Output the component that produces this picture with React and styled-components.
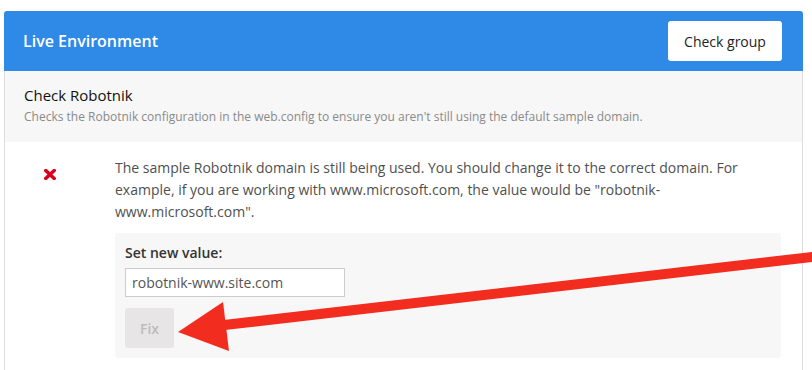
import React from "react";
import styled, { createGlobalStyle } from "styled-components";

const Global = createGlobalStyle`
  html, body { margin: 0; padding: 0; background: #fff; }
  body { font-family: "Open Sans", "Noto Sans", sans-serif; overflow: hidden; }
  * { box-sizing: border-box; }
`;

const Page = styled.div`
  position: relative;
  width: 812px;
  height: 370px;
  padding: 11px 0 0 4px;
  overflow: hidden;
`;

const Panel = styled.section`
  width: 799px;
  display: flex;
  flex-direction: column;
`;

const Header = styled.header`
  height: 60px;
  background: #2e8ae6;
  border-radius: 3px 3px 0 0;
  padding: 0 21px 0 19px;
  display: flex;
  align-items: center;
  justify-content: space-between;
`;

const Title = styled.h2`
  margin: 0;
  font-size: 16px;
  font-weight: 600;
  color: #fff;
`;

const HeaderButton = styled.button`
  height: 40px;
  width: 114px;
  border: none;
  border-radius: 3px;
  background: #fff;
  color: #1e1e1e;
  font-family: inherit;
  font-size: 14px;
  padding: 0;
`;

const CheckInfo = styled.div`
  height: 71px;
  background: #f7f7f7;
  border-left: 1px solid #ddd;
  border-right: 1px solid #ddd;
  padding: 14px 0 0 19px;
`;

const CheckName = styled.h3`
  margin: 0;
  font-size: 15px;
  font-weight: 400;
  line-height: 20px;
  color: #111;
`;

const CheckDesc = styled.p`
  margin: 4px 0 0;
  font-size: 12px;
  line-height: 16px;
  color: #8a8a8a;
`;

const Result = styled.div`
  border-left: 1px solid #ddd;
  border-right: 1px solid #ddd;
  padding: 15px 21px 20px 0;
  display: grid;
  grid-template-columns: 110px 1fr;
`;

const StatusCell = styled.div`
  padding: 6px 0 0 39px;
`;

const Message = styled.p`
  margin: 0 0 10px;
  font-size: 14px;
  line-height: 22px;
  color: #505050;
`;

const FixBox = styled.div`
  background: #f7f7f7;
  border-radius: 3px;
  padding: 10px;
  display: flex;
  flex-direction: column;
  align-items: flex-start;
`;

const Label = styled.label`
  font-size: 14px;
  font-weight: 600;
  line-height: 20px;
  color: #333;
`;

const ValueInput = styled.input`
  margin-top: 5px;
  width: 220px;
  height: 29px;
  border: 1px solid #ccc;
  background: #fff;
  padding: 0 6px;
  font-family: inherit;
  font-size: 14px;
  color: #555;
  outline: none;
`;

const FixButton = styled.button`
  margin-top: 11px;
  width: 49px;
  height: 40px;
  border: none;
  border-radius: 3px;
  background: #e7e5e5;
  color: #bcbcbc;
  font-family: inherit;
  font-size: 14px;
  font-weight: 600;
  padding: 0;
`;

const Annotation = styled.svg`
  position: absolute;
  left: 0;
  top: 0;
  width: 812px;
  height: 370px;
  pointer-events: none;
`;

const ErrorIcon = () => (
  <svg width="12" height="11" viewBox="0 0 12 11">
    <path d="M1.8 1.5 L10.2 9.5 M10.2 1.5 L1.8 9.5" stroke="#d9001b" strokeWidth="3.4" strokeLinecap="square" />
  </svg>
);

export default function App() {
  return (
    <Page>
      <Global />
      <Panel>
        <Header>
          <Title>Live Environment</Title>
          <HeaderButton>Check group</HeaderButton>
        </Header>
        <CheckInfo>
          <CheckName>Check Robotnik</CheckName>
          <CheckDesc>
            Checks the Robotnik configuration in the web.config to ensure you aren't still using the default sample domain.
          </CheckDesc>
        </CheckInfo>
        <Result>
          <StatusCell>
            <ErrorIcon />
          </StatusCell>
          <div>
            <Message>
              The sample Robotnik domain is still being used. You should change it to the correct domain. For example, if you are working with www.microsoft.com, the value would be "robotnik-www.microsoft.com".
            </Message>
            <FixBox>
              <Label>Set new value:</Label>
              <ValueInput defaultValue="robotnik-www.site.com" />
              <FixButton>Fix</FixButton>
            </FixBox>
          </div>
        </Result>
      </Panel>
      <Annotation viewBox="0 0 812 370">
        <line x1="830" y1="254.9" x2="222" y2="325.3" stroke="#f22c1e" strokeWidth="10" />
        <polygon points="178,332 223,302 229,351" fill="#f22c1e" />
      </Annotation>
    </Page>
  );
}
